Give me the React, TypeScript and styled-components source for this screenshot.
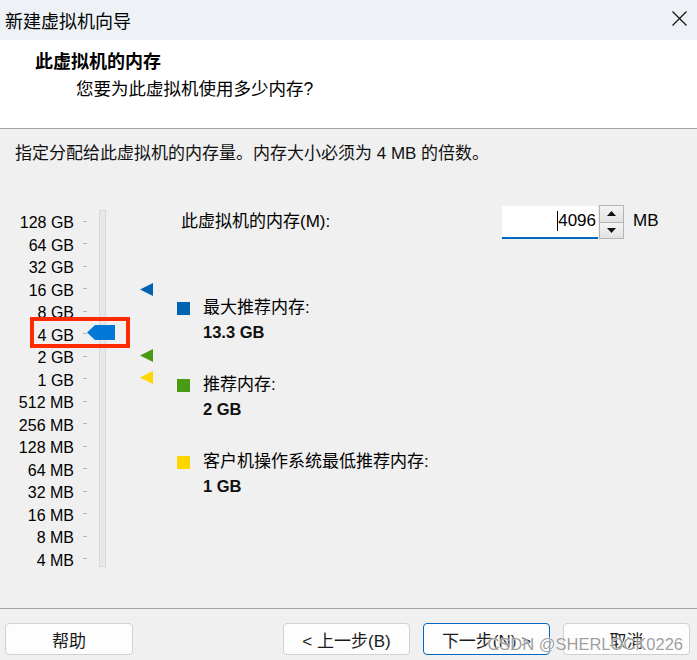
import React from "react";
import styled, { createGlobalStyle } from "styled-components";

const GlobalStyle = createGlobalStyle`
  html, body {
    margin: 0;
    padding: 0;
    background: #f0f0f0;
  }
  body {
    font-family: "Liberation Sans", "Noto Sans CJK SC", sans-serif;
    color: #000;
  }
`;

const SCALE = [
  "128 GB",
  "64 GB",
  "32 GB",
  "16 GB",
  "8 GB",
  "4 GB",
  "2 GB",
  "1 GB",
  "512 MB",
  "256 MB",
  "128 MB",
  "64 MB",
  "32 MB",
  "16 MB",
  "8 MB",
  "4 MB",
];
const ROW = 22.53;
const SLIDER_TOP = 5;
// centre of a scale step, measured from the top of the slider box
const stepY = (i: number) => SLIDER_TOP + i * ROW + 10;

const MARKERS = [
  { at: 3.1, color: "#0063b1" },
  { at: 6, color: "#4a9a13" },
  { at: 7, color: "#ffd500" },
];

const LEGEND = [
  { color: "#0063b1", label: "最大推荐内存:", value: "13.3 GB" },
  { color: "#4a9a13", label: "推荐内存:", value: "2 GB" },
  { color: "#ffd500", label: "客户机操作系统最低推荐内存:", value: "1 GB" },
];

const Window = styled.div`
  position: relative;
  display: flex;
  flex-direction: column;
  height: 660px;
  overflow: hidden;
`;

const TitleBar = styled.div`
  height: 40px;
  display: flex;
  align-items: center;
  justify-content: space-between;
  padding: 0 10px 0 5px;
  background: #eef2f7;
  font-size: 18px;
  flex-shrink: 0;
`;

const CloseButton = styled.svg`
  width: 15px;
  height: 15px;
  margin-top: -4px;
`;

const Header = styled.div`
  height: 89px;
  background: #fff;
  border-bottom: 1px solid #a3a3a3;
  padding: 10px 0 0 35px;
  box-sizing: border-box;
  flex-shrink: 0;
`;

const Heading = styled.div`
  font-size: 18px;
  line-height: 24px;
  font-weight: 700;
`;

const Subheading = styled.div`
  font-size: 17.5px;
  line-height: 24px;
  margin: 3px 0 0 41px;
`;

const Body = styled.div`
  flex: 1;
  padding: 13px 0 0 15px;
`;

const Description = styled.div`
  font-size: 17px;
  line-height: 24px;
  color: #111;
`;

const Content = styled.div`
  display: flex;
  margin: 39px 0 0 -15px;
`;

const Slider = styled.div`
  position: relative;
  width: 177px;
  padding-top: ${SLIDER_TOP}px;
  flex-shrink: 0;
`;

const ScaleRow = styled.div`
  display: flex;
  align-items: center;
  height: ${ROW}px;
`;

const ScaleLabel = styled.span`
  width: 74px;
  text-align: right;
  font-size: 16px;
  line-height: ${ROW}px;
  padding-top: 4px;
`;

const Tick = styled.span`
  width: 4px;
  height: 1px;
  margin: 0 0 0 9px;
  background: #bcbcac;
`;

const Track = styled.div`
  position: absolute;
  left: 99px;
  top: ${SLIDER_TOP}px;
  width: 7px;
  height: 357px;
  box-sizing: border-box;
  background: #e8e8e8;
  border: 1px solid #d8d8d8;
`;

const Thumb = styled.svg`
  position: absolute;
  left: 87px;
  width: 28px;
  height: 15px;
`;

const Marker = styled.svg`
  position: absolute;
  left: 140px;
  width: 13px;
  height: 13px;
`;

const Highlight = styled.div`
  position: absolute;
  left: 30px;
  width: 100px;
  height: 31px;
  box-sizing: border-box;
  border: 4px solid #ff2a00;
`;

const Panel = styled.div`
  flex: 1;
  display: flex;
  flex-direction: column;
`;

const MemoryRow = styled.div`
  display: grid;
  grid-template-columns: 325px 96px 26px auto;
  align-items: center;
  height: 34px;
`;

const FieldLabel = styled.label`
  font-size: 17px;
  line-height: 24px;
  padding-left: 4px;
`;

const NumberInput = styled.div`
  height: 33px;
  box-sizing: border-box;
  background: #fff;
  border-bottom: 2px solid #0067c0;
  display: flex;
  align-items: center;
  justify-content: flex-end;
  padding-right: 2px;
  font-size: 17px;
`;

const Caret = styled.span`
  width: 1px;
  height: 20px;
  background: #000;
`;

const Spinner = styled.div`
  display: flex;
  flex-direction: column;
  height: 34px;
  margin-left: 1px;
`;

const SpinButton = styled.div`
  flex: 1;
  display: flex;
  align-items: center;
  justify-content: center;
  border: 1px solid #b4b4b4;
  background: linear-gradient(#f4f4f4, #e2e2e2);
  & + & {
    border-top: none;
  }
`;

const Unit = styled.span`
  font-size: 17px;
  margin: -2px 0 0 9px;
`;

const Legend = styled.div`
  display: flex;
  flex-direction: column;
  gap: 29px;
  margin-top: 57px;
`;

const LegendItem = styled.div`
  display: grid;
  grid-template-columns: 13px auto;
  column-gap: 13px;
  font-size: 17px;
  line-height: 24px;
`;

const Swatch = styled.span<{ $color: string }>`
  width: 13px;
  height: 13px;
  align-self: center;
  background: ${(p) => p.$color};
`;

const LegendValue = styled.span`
  grid-column: 2;
  font-weight: 700;
  font-size: 16.5px;
  color: #111;
`;

const Footer = styled.div`
  flex-shrink: 0;
  display: flex;
  gap: 13px;
  border-top: 1px solid #a3a3a3;
  padding: 14px 7px 5px 5px;
`;

const Button = styled.button<{ $primary?: boolean }>`
  width: 127px;
  height: 32px;
  box-sizing: border-box;
  border-radius: 4px;
  border: 1px solid ${(p) => (p.$primary ? "#0067c0" : "#d0d0d0")};
  background: #fdfdfd;
  font-family: "Liberation Sans", "Noto Sans CJK SC", sans-serif;
  font-size: 17px;
  color: #1b1b1b;
  padding: 0;
  &:first-of-type {
    margin-right: auto;
    width: 128px;
  }
`;

const Watermark = styled.div`
  position: absolute;
  right: 14px;
  bottom: 6px;
  font-size: 16.5px;
  color: rgba(90, 90, 90, 0.6);
  text-shadow: 0 0 2px #fff, 0 0 1px #fff;
  pointer-events: none;
`;

const Arrow = ({ up }: { up?: boolean }) => (
  <svg width="9" height="5" viewBox="0 0 9 5">
    <polygon points={up ? "0,5 4.5,0 9,5" : "0,0 9,0 4.5,5"} fill="#111" />
  </svg>
);

export default function App() {
  return (
    <>
      <GlobalStyle />
      <Window>
        <TitleBar>
          <span>新建虚拟机向导</span>
          <CloseButton viewBox="0 0 15 15">
            <path d="M0.5 0.5 L14.5 14.5 M14.5 0.5 L0.5 14.5" stroke="#111" strokeWidth="1.2" />
          </CloseButton>
        </TitleBar>
        <Header>
          <Heading>此虚拟机的内存</Heading>
          <Subheading>您要为此虚拟机使用多少内存?</Subheading>
        </Header>
        <Body>
          <Description>指定分配给此虚拟机的内存量。内存大小必须为 4 MB 的倍数。</Description>
          <Content>
            <Slider>
              <Track />
              {SCALE.map((s) => (
                <ScaleRow key={s}>
                  <ScaleLabel>{s}</ScaleLabel>
                  <Tick />
                </ScaleRow>
              ))}
              <Thumb viewBox="0 0 28 15" style={{ top: stepY(5) - 7.5 }}>
                <polygon points="0,7.5 8,0 28,0 28,15 8,15" fill="#0078d7" />
              </Thumb>
              {MARKERS.map((m) => (
                <Marker key={m.color} viewBox="0 0 13 13" style={{ top: stepY(m.at) - 6.5 }}>
                  <polygon points="0,6.5 13,0 13,13" fill={m.color} />
                </Marker>
              ))}
              <Highlight style={{ top: stepY(5) - 15.5 }} />
            </Slider>
            <Panel>
              <MemoryRow>
                <FieldLabel>此虚拟机的内存(M):</FieldLabel>
                <NumberInput>
                  <Caret />
                  4096
                </NumberInput>
                <Spinner>
                  <SpinButton>
                    <Arrow up />
                  </SpinButton>
                  <SpinButton>
                    <Arrow />
                  </SpinButton>
                </Spinner>
                <Unit>MB</Unit>
              </MemoryRow>
              <Legend>
                {LEGEND.map((l) => (
                  <LegendItem key={l.label}>
                    <Swatch $color={l.color} />
                    <span>{l.label}</span>
                    <LegendValue>{l.value}</LegendValue>
                  </LegendItem>
                ))}
              </Legend>
            </Panel>
          </Content>
        </Body>
        <Footer>
          <Button>帮助</Button>
          <Button>&lt; 上一步(B)</Button>
          <Button $primary>下一步(N) &gt;</Button>
          <Button>取消</Button>
        </Footer>
        <Watermark>CSDN @SHERLOCK0226</Watermark>
      </Window>
    </>
  );
}
